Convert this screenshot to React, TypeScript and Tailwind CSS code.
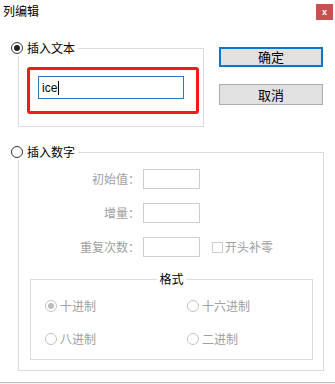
const cjk = "font-['Noto_Sans_CJK_SC','Noto_Sans_CJK_JP',sans-serif]";

function Radio({ checked, disabled }: { checked?: boolean; disabled?: boolean }) {
  return (
    <span
      className={`flex h-[12px] w-[12px] shrink-0 items-center justify-center rounded-full border bg-white ${
        disabled ? "border-[#c4c4c4]" : "border-[#333333]"
      }`}
    >
      {checked && (
        <span className={`h-[6px] w-[6px] rounded-full ${disabled ? "bg-[#bdbdbd]" : "bg-[#222222]"}`} />
      )}
    </span>
  );
}

function Legend({ label, checked }: { label: string; checked?: boolean }) {
  return (
    <div className="absolute left-[-8px] top-[-9px] flex h-[16px] items-center gap-[4px] bg-white pr-[3px]">
      <Radio checked={checked} />
      <span className="text-[12px] leading-[16px] text-black">{label}</span>
    </div>
  );
}

function NumRow({ label, children }: { label: string; children?: React.ReactNode }) {
  return (
    <div className="flex h-[20px] items-center">
      <span className="w-[121px] text-right text-[12px] leading-[20px] text-[#a0a0a0]">{label}</span>
      <span className="ml-[3px] h-[20px] w-[57px] border border-[#cfcfcf] bg-white" />
      {children}
    </div>
  );
}

function FmtOption({ label, checked }: { label: string; checked?: boolean }) {
  return (
    <div className="flex h-[16px] items-center gap-[3px]">
      <Radio checked={checked} disabled />
      <span className="text-[12px] leading-[16px] text-[#a0a0a0]">{label}</span>
    </div>
  );
}

export default function App() {
  return (
    <div className={`relative flex h-[384px] w-[335px] flex-col overflow-hidden bg-white ${cjk}`}>
      <div className="flex h-[22px] items-start justify-between pl-[3px] pr-[2px] pt-[4px]">
        <span className="text-[12px] leading-[14px] text-black">列编辑</span>
        <span className="flex h-[16px] w-[17px] items-center justify-center bg-[#c75050] font-['Liberation_Sans',sans-serif] text-[9px] font-bold leading-none text-white">
          x
        </span>
      </div>

      <div className="flex flex-col pl-[18px]">
        <div className="mt-[25px] flex items-start">
          <div className="relative mt-[1px] h-[79px] w-[186px] border border-[#dcdcdc]">
            <Legend label="插入文本" checked />
            <div className="ml-[8px] mt-[18px] h-[47px] w-[172px] rounded-[3px] border-[3px] border-[#ee1c1c]">
              <div className="ml-[8px] mt-[6px] flex h-[23px] w-[146px] items-center border border-[#2b79c4] pl-[3px]">
                <span className="font-['Liberation_Sans','Noto_Sans_CJK_SC',sans-serif] text-[12px] leading-[16px] text-black">
                  ice
                </span>
                <span className="ml-[1px] h-[14px] w-[1px] bg-black" />
              </div>
            </div>
          </div>

          <div className="ml-[15px] flex flex-col">
            <button className="flex h-[20px] w-[104px] items-center justify-center border-2 border-[#0078d7] bg-[#e1e1e1] text-[13px] leading-[16px] text-black">
              确定
            </button>
            <button className="mt-[17px] flex h-[21px] w-[104px] items-center justify-center border border-[#adadad] bg-[#e1e1e1] text-[13px] leading-[16px] text-black">
              取消
            </button>
          </div>
        </div>

        <div className="relative mt-[25px] flex h-[219px] w-[306px] flex-col border border-[#dcdcdc]">
          <Legend label="插入数字" />
          <div className="mt-[16px] flex flex-col gap-[14px]">
            <NumRow label="初始值：" />
            <NumRow label="增量：" />
            <NumRow label="重复次数：">
              <span className="ml-[12px] h-[11px] w-[11px] border border-[#cfcfcf] bg-white" />
              <span className="ml-[2px] text-[12px] leading-[16px] text-[#a0a0a0]">开头补零</span>
            </NumRow>
          </div>

          <div className="relative ml-[11px] mt-[22px] h-[81px] w-[283px] border border-[#dcdcdc]">
            <div className="absolute left-0 right-0 top-[-9px] flex justify-center">
              <span className="bg-white px-[2px] text-[12px] leading-[16px] text-black">格式</span>
            </div>
            <div className="mt-[18px] grid grid-cols-[142px_1fr] gap-y-[17px] pl-[14px]">
              <FmtOption label="十进制" checked />
              <FmtOption label="十六进制" />
              <FmtOption label="八进制" />
              <FmtOption label="二进制" />
            </div>
          </div>
        </div>
      </div>

      <div className="mt-auto h-[2px] w-full border-t border-[#b9b9b9] bg-[#f4f4f4]" />
    </div>
  );
}
